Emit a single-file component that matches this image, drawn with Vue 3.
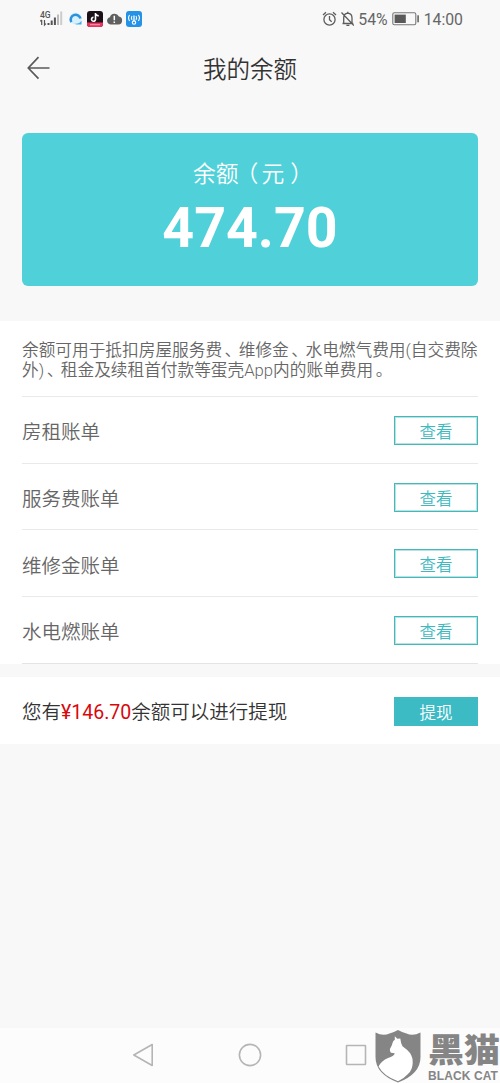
<script setup>
const bills = ['房租账单', '服务费账单', '维修金账单', '水电燃账单']
</script>

<template>
  <div class="screen">
    <div class="status">
      <svg class="left-icons" width="106" height="20" viewBox="0 0 106 20">
        <text x="1" y="8.6" class="net">4G</text>
        <path d="M2.7 11v5M1.3 12.3 2.7 11M5.5 11v5l1.4-1.4" fill="none" stroke="#555" stroke-width="1.2" />
        <g fill="#555">
          <rect x="8.5" y="14" width="2" height="2" />
          <rect x="11.7" y="11.5" width="2" height="4.5" />
          <rect x="14.9" y="8.5" width="2" height="7.5" />
        </g>
        <rect x="18" y="5.5" width="2" height="10.5" fill="#bbb" />
        <rect x="21.2" y="2.5" width="2" height="13.5" fill="#ccc" />
        <circle cx="36.5" cy="9.5" r="6" fill="#d6f0fc" />
        <path d="M32.3 13.2A5 5 0 1 1 41.5 9.5" fill="none" stroke="#2b93dc" stroke-width="2.6" />
        <path d="M35 14.5q5 1 7.5-3v4h-5z" fill="#45a9ec" />
        <rect x="48" y="2" width="16" height="16" rx="3" fill="#1c1118" />
        <path d="M48 13.5h16v1.5a3 3 0 0 1-3 3H51a3 3 0 0 1-3-3z" fill="#e83560" />
        <path d="M51 15.7h10" stroke="#ff9db3" stroke-width="1" />
        <path d="M56.5 4v6.2a2 2 0 1 1-2-1.9M56.5 4q.4 2.6 3.2 2.9" fill="none" stroke="#fff" stroke-width="1.6" />
        <path d="M71.5 15.5a4 3.7 0 0 1-.6-7.2 4.8 4.8 0 0 1 9-.7 4 4 0 0 1-.4 7.9z" fill="#606060" />
        <path d="M75.3 6.7v4.6M75.3 12.5v1.6" stroke="#fff" stroke-width="1.5" />
        <rect x="87" y="2" width="16" height="16" rx="3" fill="#2492e7" />
        <path d="M90.6 6q-2.1 2.6 0 6M93 7q-1.2 1.8 0 4M99.4 6q2.1 2.6 0 6M97 7q1.2 1.8 0 4" fill="none" stroke="#fff" stroke-width="1.1" />
        <path d="M95 6.5v6" stroke="#fff" stroke-width="1.3" />
        <circle cx="95" cy="13.6" r="1.7" fill="none" stroke="#fff" stroke-width="1.1" />
      </svg>
      <div class="right-status">
        <svg width="34" height="18" viewBox="0 0 34 18" fill="none" stroke="#5c5c5c" stroke-width="1.3">
          <circle cx="9.5" cy="9.5" r="5.6" />
          <path d="M9.5 6v3.7l2.2 2M3 5l3-2.8M16 5l-3-2.8" />
          <path d="M22.5 13.5h10.8M23.7 13V8q0-4.4 4.1-4.8 4.2.4 4.2 4.8v5M27.8 3.2V1.8M26.4 15.3h3M21.5 2.5l12.4 13" />
        </svg>
        <span class="pct">54%</span>
        <svg class="battery" width="28" height="14" viewBox="0 0 28 14">
          <rect x=".8" y=".8" width="23" height="11.9" rx="1.5" fill="none" stroke="#777" stroke-width="1.1" />
          <rect x="2.6" y="2.6" width="11.2" height="8.4" fill="#5a5a5a" />
          <rect x="25.3" y="3.3" width="1.6" height="7" fill="#666" />
        </svg>
        <span class="time">14:00</span>
      </div>
    </div>

    <header class="head">
      <svg class="back" width="24" height="24" viewBox="0 0 24 24" fill="none" stroke="#5a5a5a" stroke-width="1.7">
        <path d="M22.5 12H1.5M11.5 1.2 1.3 12 11.5 22.6" />
      </svg>
      <h1>我的余额</h1>
    </header>

    <section class="card">
      <div class="label">余<span class="tight">额</span><span class="open">（</span>元<span class="close">）</span></div>
      <div class="amount">474.70</div>
    </section>

    <section class="panel">
      <p class="desc">余额可用于抵扣房屋服务费<i>、</i>维修金<i>、</i>水电燃气费用(自交费除<br />外)<i>、</i>租金及续租首付款等蛋壳App内的账单费用<i>。</i></p>
      <div v-for="bill in bills" :key="bill" class="row">
        <span class="name">{{ bill }}</span>
        <button class="btn">查看</button>
      </div>
    </section>

    <section class="withdraw">
      <span>您有<b>¥146.70</b>余额可以进行提现</span>
      <button class="btn solid">提现</button>
    </section>

    <nav class="nav">
      <svg width="260" height="26" viewBox="0 0 260 26" fill="none" stroke="#b5b5b5" stroke-width="1.6" stroke-linejoin="round">
        <path d="M20.2 2.5v21L1.8 13z" />
        <circle cx="118" cy="13" r="10.6" />
        <rect x="214.5" y="3.5" width="19" height="19" rx=".5" />
      </svg>
    </nav>

    <div class="watermark">
      <svg width="46" height="53" viewBox="0 0 46 53">
        <path d="M.5 2.5Q8 6.5 14.5 3.5Q19 2 23 0Q27 2 31.5 3.5Q38 6.5 45.5 2.5V27Q45.5 44 23 52.5Q.5 44 .5 27Z" fill="#858585" />
        <path d="M19.8 6.2 22.3 8.8 25.3 8.5Q25.8 13.500 27.5 16.3Q32 19.500 35 23Q38 27.500 37.700 33Q37.500 40 33 44Q29 48.500 23 51.2Q8.500 46 3.600 36.500Q6.500 30.500 13 28Q19 26.500 19.800 23.600Q18.500 22.800 15.900 22.700Q14.600 21 14.900 19Q16.500 17 17.700 12.500Q18 11 19.800 9.800Z" fill="#fff" />
      </svg>
      <div class="brand">
        <div class="cn">黑猫</div>
        <div class="en">BLACK CAT</div>
      </div>
    </div>
  </div>
</template>

<style>
body {
  background: #f8f8f8;
  overflow: hidden;
}
</style>

<style scoped>
.screen {
  position: relative;
  display: flex;
  flex-direction: column;
  width: 500px;
  height: 1083px;
  overflow: hidden;
  background: #f8f8f8;
  color: #666;
  font-family: Roboto, "Noto Sans CJK SC", sans-serif;
  font-weight: 350;
  white-space: nowrap;
}
.status {
  box-sizing: border-box;
  height: 38px;
  padding: 9px 37px 0 39px;
  display: flex;
  justify-content: space-between;
}
.net {
  font: 500 8.5px Roboto, sans-serif;
  fill: #555;
}
.right-status {
  display: flex;
  align-items: center;
  height: 20px;
  font-size: 15.8px;
  font-weight: 400;
  color: #666;
}
.left-icons { flex: none; }
.pct { margin-left: 4px; }
.battery { margin: 0 4px 0 4px; }
.head {
  position: relative;
  height: 60px;
  display: flex;
  align-items: center;
  justify-content: center;
}
.back {
  position: absolute;
  left: 27px;
  top: 18px;
}
h1 {
  margin: 3px 0 0;
  font-size: 23.5px;
  font-weight: 350;
  line-height: 30px;
  color: #333;
}
.card {
  box-sizing: border-box;
  flex: none;
  height: 153px;
  margin: 35px 22px 0;
  padding-top: 27px;
  border-radius: 6px;
  background: #50d1d9;
  color: #fff;
  text-align: center;
}
.label {
  font-size: 22.8px;
  line-height: 30px;
}
.tight { letter-spacing: -3px; }
.open { letter-spacing: 3px; }
.close {
  margin: 0 0 0 6px;
  letter-spacing: -6px;
}
.amount {
  margin-top: 8px;
  font-size: 55.5px;
  font-weight: 700;
  line-height: 62px;
}
.panel {
  box-sizing: border-box;
  height: 343px;
  margin-top: 35px;
  padding: 20px 22px 0;
  background: #fff;
}
.desc {
  height: 55px;
  margin: 0;
  font-size: 16.68px;
  line-height: 19.5px;
}
.desc i {
  margin-left: 2.5px;
  letter-spacing: -2.5px;
  font-style: normal;
}
.row {
  box-sizing: border-box;
  height: 66.7px;
  display: flex;
  align-items: center;
  justify-content: space-between;
  border-top: 1px solid #e9e9e9;
  font-size: 19.5px;
}
.row:last-child {
  height: 67.7px;
  border-bottom: 1px solid #e4e4e4;
}
.name { padding-top: 2px; }
.btn {
  box-sizing: border-box;
  width: 84px;
  height: 29px;
  margin-top: 1px;
  padding: 5px 0 0;
  border: 1px solid #45b8ba;
  box-shadow: inset 0 0 0 1px rgba(75, 186, 188, .4);
  background: #fff;
  color: #3db9bf;
  font: inherit;
  font-size: 16.5px;
  line-height: 22px;
}
.solid {
  border-color: #3dbbc5;
  background: #3dbbc5;
  color: #fff;
}
.withdraw {
  box-sizing: border-box;
  height: 67px;
  margin-top: 13px;
  padding: 0 22px;
  display: flex;
  align-items: center;
  justify-content: space-between;
  background: #fff;
  color: #333;
  font-size: 19.5px;
}
.withdraw b {
  color: #d8080c;
  font-weight: 400;
}
.nav {
  box-sizing: border-box;
  height: 55px;
  margin-top: auto;
  padding: 14px 0 0 132px;
  background: #fcfcfc;
}
.watermark {
  position: absolute;
  left: 375px;
  top: 1030px;
  display: flex;
  gap: 7px;
  color: #858585;
}
.cn {
  height: 36px;
  margin-top: 2px;
  font-size: 36px;
  line-height: 36px;
  font-weight: 900;
  transform: scaleY(.93);
  transform-origin: bottom;
}
.en {
  margin-top: 2px;
  font: 700 12px/13px "Liberation Sans", sans-serif;
  letter-spacing: .1px;
}
</style>
